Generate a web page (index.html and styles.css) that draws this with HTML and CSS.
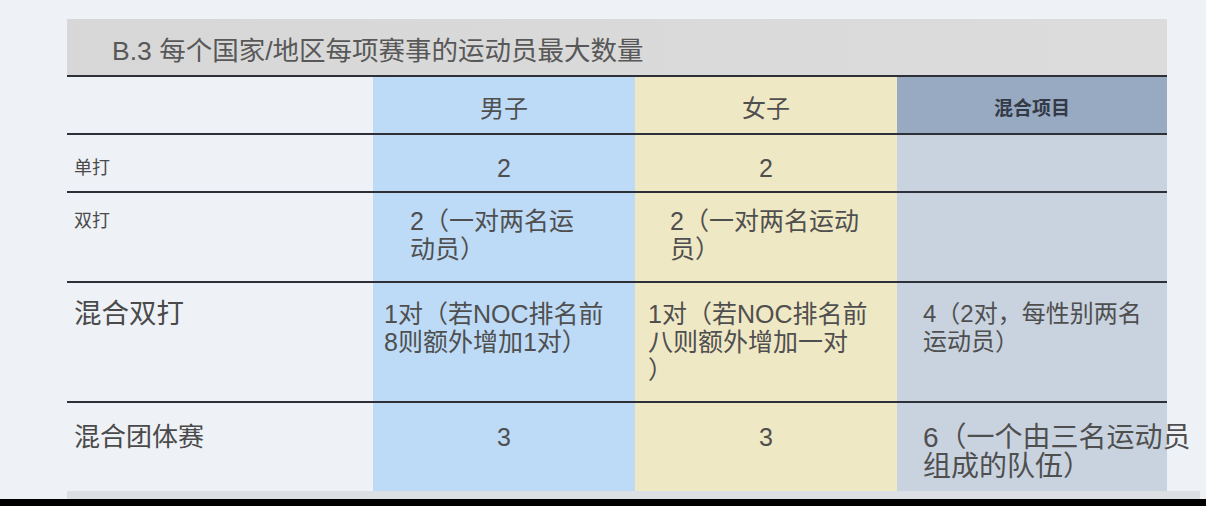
FILE: index.html
```html
<!DOCTYPE html>
<html lang="zh-CN">
<head>
<meta charset="utf-8">
<title>B.3 每个国家/地区每项赛事的运动员最大数量</title>
<link rel="stylesheet" href="styles.css">
</head>
<body>
<div class="page">
  <div class="sheet">
    <div class="title">B.3 每个国家/地区每项赛事的运动员最大数量</div>
    <div class="table">
      <div class="cell head c-label"></div>
      <div class="cell head c-men">男子</div>
      <div class="cell head c-women">女子</div>
      <div class="cell head c-mixed mixed-head">混合项目</div>

      <div class="cell c-label small r1">单打</div>
      <div class="cell c-men center r1">2</div>
      <div class="cell c-women center r1">2</div>
      <div class="cell c-mixed r1"></div>

      <div class="cell c-label small r2">双打</div>
      <div class="cell c-men indent r2">2（一对两名运<br>动员）</div>
      <div class="cell c-women indent r2">2（一对两名运动<br>员）</div>
      <div class="cell c-mixed r2"></div>

      <div class="cell c-label big r3">混合双打</div>
      <div class="cell c-men r3">1对（若NOC排名前<br>8则额外增加1对）</div>
      <div class="cell c-women r3">1对（若NOC排名前<br>八则额外增加一对<br>）</div>
      <div class="cell c-mixed mid r3">4（2对，每性别两名<br>运动员）</div>

      <div class="cell c-label big2 r4">混合团体赛</div>
      <div class="cell c-men center r4">3</div>
      <div class="cell c-women center r4">3</div>
      <div class="cell c-mixed large r4">6（一个由三名运动员<br>组成的队伍）</div>
    </div>
  </div>
  <div class="strip"></div>
  <div class="black"></div>
</div>
</body>
</html>
```

FILE: styles.css
```css
* { box-sizing: border-box; }
html, body { margin: 0; padding: 0; }
body {
  width: 1206px;
  height: 506px;
  overflow: hidden;
  background: #eef2f6;
  font-family: "Liberation Sans", "Noto Sans CJK SC", sans-serif;
  color: #4f4f4f;
}
.page {
  display: flex;
  flex-direction: column;
  height: 506px;
}
.sheet {
  margin: 19px 0 0 67px;
  width: 1100px;
}
.title {
  height: 56px;
  background: linear-gradient(90deg, #d7d7d7, #dadada 60%, #dcdcdc);
  color: #585858;
  font-size: 26.5px;
  display: flex;
  align-items: center;
  padding: 2px 0 0 45px;
  white-space: nowrap;
}
.table {
  display: grid;
  grid-template-columns: 306px 262px 262px 270px;
  grid-template-rows: 58px 58px 90px 120px 90px;
}
.cell {
  border-top: 2px solid #2d3137;
  padding-top: 16px;
  font-size: 25px;
  line-height: 28px;
  white-space: nowrap;
}
.c-label { background: #eef2f6; padding-left: 7px; color: #4a4a4a; }
.c-men { background: #bddbf7; padding-left: 11px; }
.c-women { background: #efe8c5; padding-left: 13px; }
.c-mixed { background: #c9d3df; padding-left: 26px; }

.head {
  display: flex;
  align-items: center;
  justify-content: center;
  padding: 8px 0 0 0;
  font-size: 24px;
}
.head.c-label { background: #eef2f6; }
.mixed-head {
  background: #98a9c2;
  font-size: 19px;
  font-weight: bold;
  color: #333a46;
}
.center { text-align: center; padding-left: 0; }
.indent.c-men { padding-left: 37px; }
.indent.c-women { padding-left: 35px; }
.small { font-size: 18px; }
.big { font-size: 27.5px; }
.big2 { font-size: 26px; }
.mid { font-size: 24px; }
.large { font-size: 28px; line-height: 29px; }
.r1 { padding-top: 19px; }
.r2 { padding-top: 14px; }
.r3 { padding-top: 17px; }
.r4 { padding-top: 20px; }

.strip {
  margin-left: 67px;
  width: 1133px;
  height: 8px;
  background: #dcdfe4;
}
.black {
  flex: 1;
  background: #000;
}
```
